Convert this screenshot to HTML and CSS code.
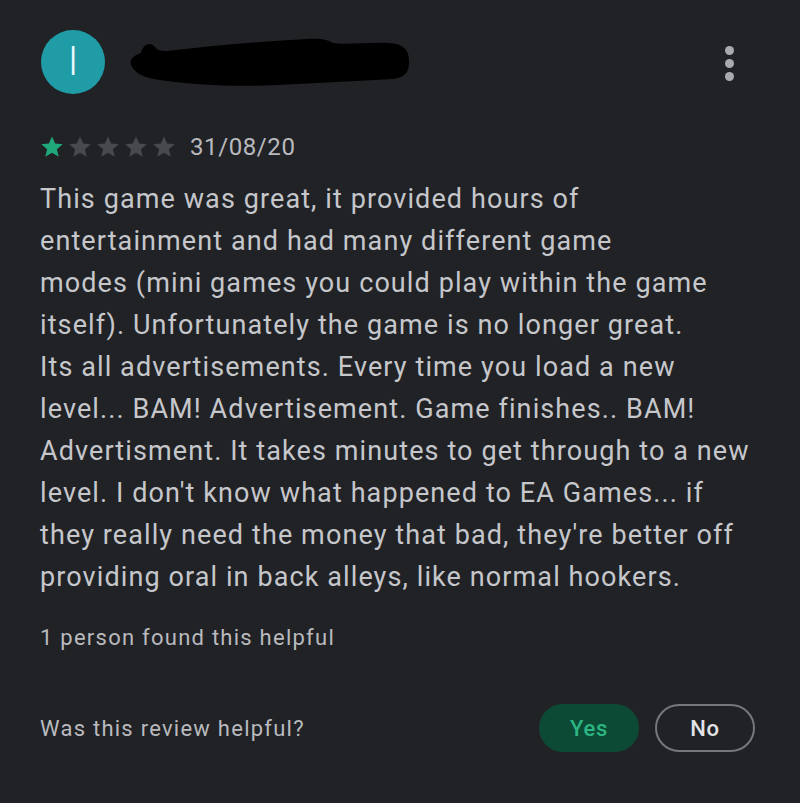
FILE: index.html
```html
<!DOCTYPE html>
<html lang="en">
<head>
<meta charset="utf-8">
<title>Review</title>
<link rel="stylesheet" href="styles.css">
</head>
<body>
<div class="review">
  <div class="header">
    <div class="avatar">I</div>
    <svg class="redact" width="284" height="52" viewBox="0 0 284 52">
      <path d="M4 28 C2 22 8 18 14 16 C16 8 22 4 28 10 C30 13 32 14 40 14 C90 8 140 4 180 2 C196 1 200 3 206 6 C220 8 240 5 262 6 C276 7 282 12 282 24 C282 34 280 40 266 42 C230 44 190 46 150 48 C110 50 70 48 40 44 C24 42 10 40 4 28 Z" fill="#000"/>
    </svg>
    <div class="menu"><span></span><span></span><span></span></div>
  </div>
  <div class="rating">
    <div class="stars">
      <svg class="star on" viewBox="0 0 24 24"><path d="M12 1.5l3.1 7.1 7.6.6-5.8 5 1.8 7.5L12 17.7l-6.7 4 1.8-7.5-5.8-5 7.6-.6z"/></svg>
      <svg class="star" viewBox="0 0 24 24"><path d="M12 1.5l3.1 7.1 7.6.6-5.8 5 1.8 7.5L12 17.7l-6.7 4 1.8-7.5-5.8-5 7.6-.6z"/></svg>
      <svg class="star" viewBox="0 0 24 24"><path d="M12 1.5l3.1 7.1 7.6.6-5.8 5 1.8 7.5L12 17.7l-6.7 4 1.8-7.5-5.8-5 7.6-.6z"/></svg>
      <svg class="star" viewBox="0 0 24 24"><path d="M12 1.5l3.1 7.1 7.6.6-5.8 5 1.8 7.5L12 17.7l-6.7 4 1.8-7.5-5.8-5 7.6-.6z"/></svg>
      <svg class="star" viewBox="0 0 24 24"><path d="M12 1.5l3.1 7.1 7.6.6-5.8 5 1.8 7.5L12 17.7l-6.7 4 1.8-7.5-5.8-5 7.6-.6z"/></svg>
    </div>
    <span class="date">31/08/20</span>
  </div>
  <p class="text">This game was great, it provided hours of<br>
entertainment and had many different game<br>
modes (mini games you could play within the game<br>
itself). Unfortunately the game is no longer great.<br>
Its all advertisements. Every time you load a new<br>
level... BAM! Advertisement. Game finishes.. BAM!<br>
Advertisment. It takes minutes to get through to a new<br>
level. I don't know what happened to EA Games... if<br>
they really need the money that bad, they're better off<br>
providing oral in back alleys, like normal hookers.</p>
  <p class="helpful-count">1 person found this helpful</p>
  <div class="feedback">
    <span class="question">Was this review helpful?</span>
    <div class="buttons">
      <button class="btn yes">Yes</button>
      <button class="btn no">No</button>
    </div>
  </div>
</div>
</body>
</html>
```
FILE: styles.css
```css
html, body {
  margin: 0;
  padding: 0;
  background: #212226;
}
body {
  width: 800px;
  height: 803px;
  overflow: hidden;
  font-family: Roboto, "Noto Sans", sans-serif;
  color: #c3c4c8;
}
.review {
  padding: 30px 45px 0 40px;
}
.header {
  display: flex;
  align-items: center;
  height: 64px;
}
.avatar {
  width: 64px;
  height: 64px;
  border-radius: 50%;
  background: #1f9ca6;
  color: #e8fbff;
  font-size: 40px;
  font-weight: 300;
  line-height: 64px;
  text-align: center;
  margin-left: 1px;
}
.redact {
  margin-left: 22px;
  margin-top: 2px;
}
.menu {
  margin-left: auto;
  margin-right: 21px;
  margin-top: 2px;
  display: flex;
  flex-direction: column;
  gap: 4px;
}
.menu span {
  display: block;
  width: 9px;
  height: 9px;
  border-radius: 50%;
  background: #a9aaae;
}
.rating {
  display: flex;
  align-items: center;
  margin-top: 39px;
  height: 28px;
}
.stars {
  display: flex;
  gap: 4px;
}
.star {
  width: 24px;
  height: 24px;
  fill: #48494e;
}
.star.on {
  fill: #20a87a;
}
.date {
  margin-left: 14px;
  font-size: 24px;
  letter-spacing: 0.6px;
  color: #b9babe;
}
.text {
  margin: 17px 0 0;
  font-size: 27px;
  letter-spacing: 1.1px;
  line-height: 42px;
  color: #c6c7cb;
}
.helpful-count {
  margin: 27px 0 0;
  font-size: 22px;
  letter-spacing: 1.25px;
  color: #b9babe;
}
.feedback {
  display: flex;
  align-items: center;
  justify-content: space-between;
  margin-top: 54px;
}
.question {
  font-size: 22px;
  letter-spacing: 1.25px;
  color: #b9babe;
}
.buttons {
  display: flex;
  gap: 16px;
}
.btn {
  font-family: Roboto, "Noto Sans", sans-serif;
  font-size: 22px;
  font-weight: 500;
  letter-spacing: 0.8px;
  width: 100px;
  height: 48px;
  border-radius: 24px;
  padding: 0;
}
.yes {
  background: #0d4a36;
  color: #2bb582;
  border: none;
}
.no {
  background: transparent;
  color: #e2e3e6;
  border: 2px solid #76777b;
}
```
